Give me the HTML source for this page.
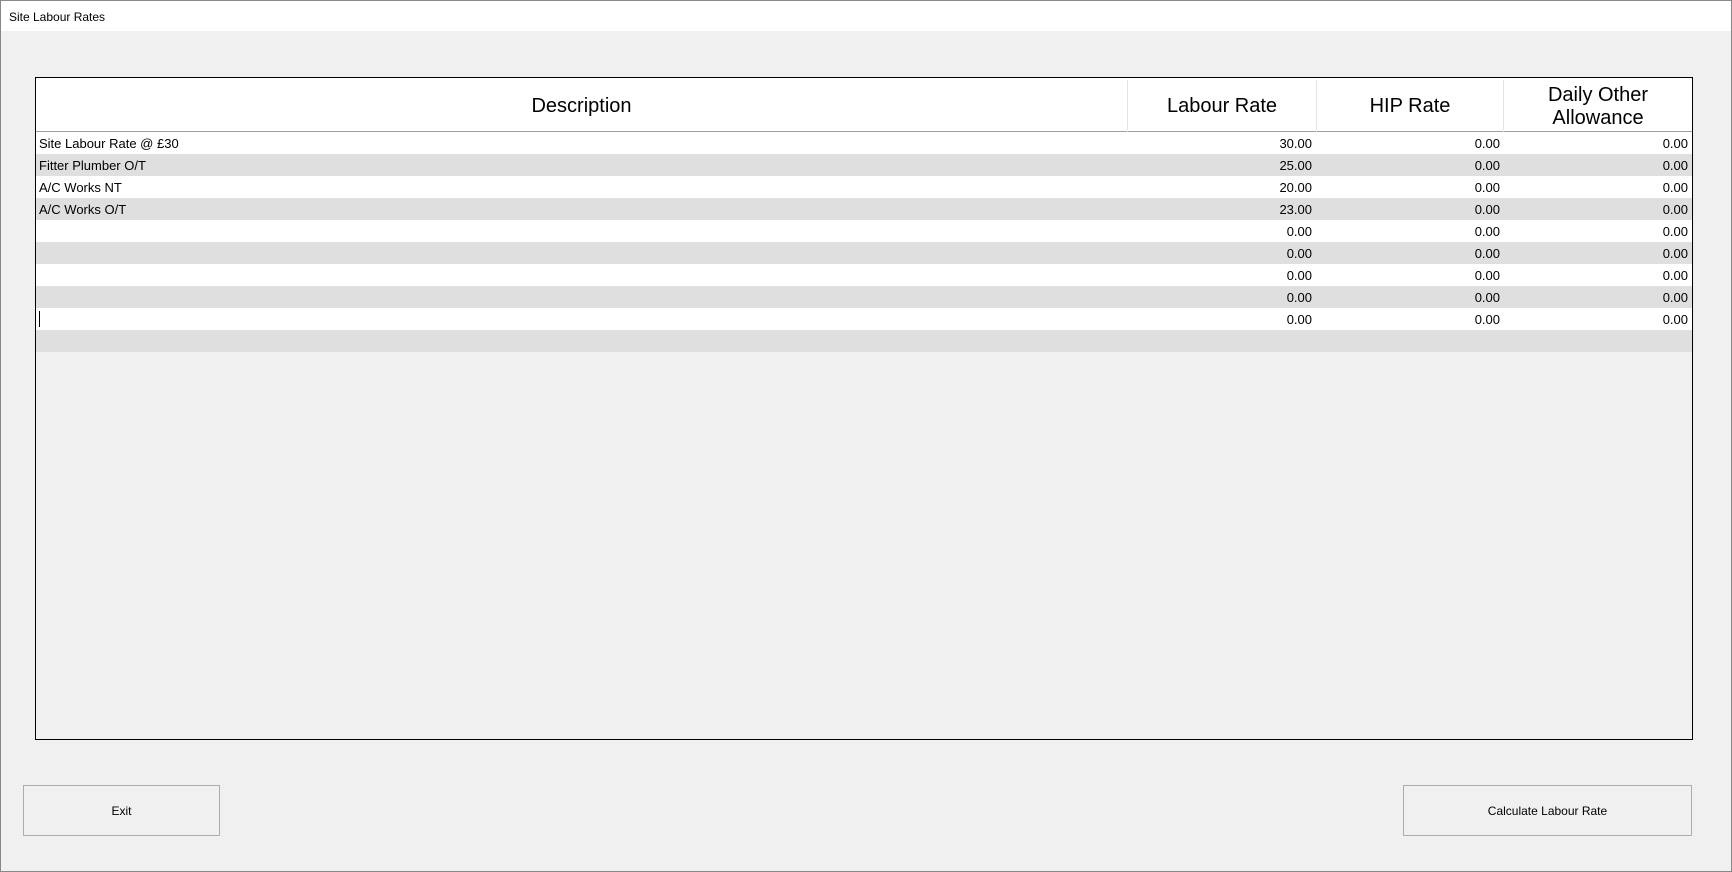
<!DOCTYPE html>
<html><head><style>
body{margin:0;width:1732px;height:872px;overflow:hidden;font-family:"Liberation Sans",sans-serif;background:#f0f0f0;}
.win{position:absolute;left:0;top:0;width:1730px;height:870px;border:1px solid #888;background:#f0f0f0;}
.title{position:absolute;left:0;top:0;width:1730px;height:30px;background:#fff;font-size:12px;line-height:32px;padding-left:8px;box-sizing:border-box;}
.grid{position:absolute;left:35px;top:77px;width:1656px;height:661px;border:1px solid #000;background:#f0f0f0;}
.hdr{position:absolute;left:0;top:0;width:1656px;height:53px;background:#fff;border-bottom:1px solid #a0a0a0;}
.hc{position:absolute;top:2px;height:53px;display:flex;align-items:center;justify-content:center;text-align:center;font-size:20px;line-height:23px;border-right:1px solid #e4e4e4;box-sizing:border-box;}
.row{position:absolute;left:0;width:1656px;height:22px;font-size:13px;line-height:24px;}
.row span{position:absolute;top:0;}
.g{background:#dfdfdf}.w{background:#fff}
.btn{position:absolute;top:785px;height:51px;border:1px solid #adadad;background:#f0f0f0;font-size:12px;display:flex;align-items:center;justify-content:center;box-sizing:border-box;}
</style></head><body>
<div class="win">
<div class="title">Site Labour Rates</div>
</div>
<div class="grid">
<div class="hdr">
<div class="hc" style="left:0;width:1092px">Description</div>
<div class="hc" style="left:1092px;width:189px">Labour Rate</div>
<div class="hc" style="left:1281px;width:187px">HIP Rate</div>
<div class="hc" style="left:1468px;width:188px;border-right:none">Daily Other<br>Allowance</div>
</div>
<div class="row w" style="top:54px"><span style="left:3px">Site Labour Rate @ £30</span><span style="right:380px">30.00</span><span style="right:192px">0.00</span><span style="right:4px">0.00</span></div>
<div class="row g" style="top:76px"><span style="left:3px">Fitter Plumber O/T</span><span style="right:380px">25.00</span><span style="right:192px">0.00</span><span style="right:4px">0.00</span></div>
<div class="row w" style="top:98px"><span style="left:3px">A/C Works NT</span><span style="right:380px">20.00</span><span style="right:192px">0.00</span><span style="right:4px">0.00</span></div>
<div class="row g" style="top:120px"><span style="left:3px">A/C Works O/T</span><span style="right:380px">23.00</span><span style="right:192px">0.00</span><span style="right:4px">0.00</span></div>
<div class="row w" style="top:142px"><span style="right:380px">0.00</span><span style="right:192px">0.00</span><span style="right:4px">0.00</span></div>
<div class="row g" style="top:164px"><span style="right:380px">0.00</span><span style="right:192px">0.00</span><span style="right:4px">0.00</span></div>
<div class="row w" style="top:186px"><span style="right:380px">0.00</span><span style="right:192px">0.00</span><span style="right:4px">0.00</span></div>
<div class="row g" style="top:208px"><span style="right:380px">0.00</span><span style="right:192px">0.00</span><span style="right:4px">0.00</span></div>
<div class="row w" style="top:230px"><div style="position:absolute;left:3px;top:3px;width:1px;height:16px;background:#000"></div><span style="right:380px">0.00</span><span style="right:192px">0.00</span><span style="right:4px">0.00</span></div>
<div class="row g" style="top:252px"></div>
</div>
<div class="btn" style="left:23px;width:197px">Exit</div>
<div class="btn" style="left:1403px;width:289px">Calculate Labour Rate</div>
</body></html>
